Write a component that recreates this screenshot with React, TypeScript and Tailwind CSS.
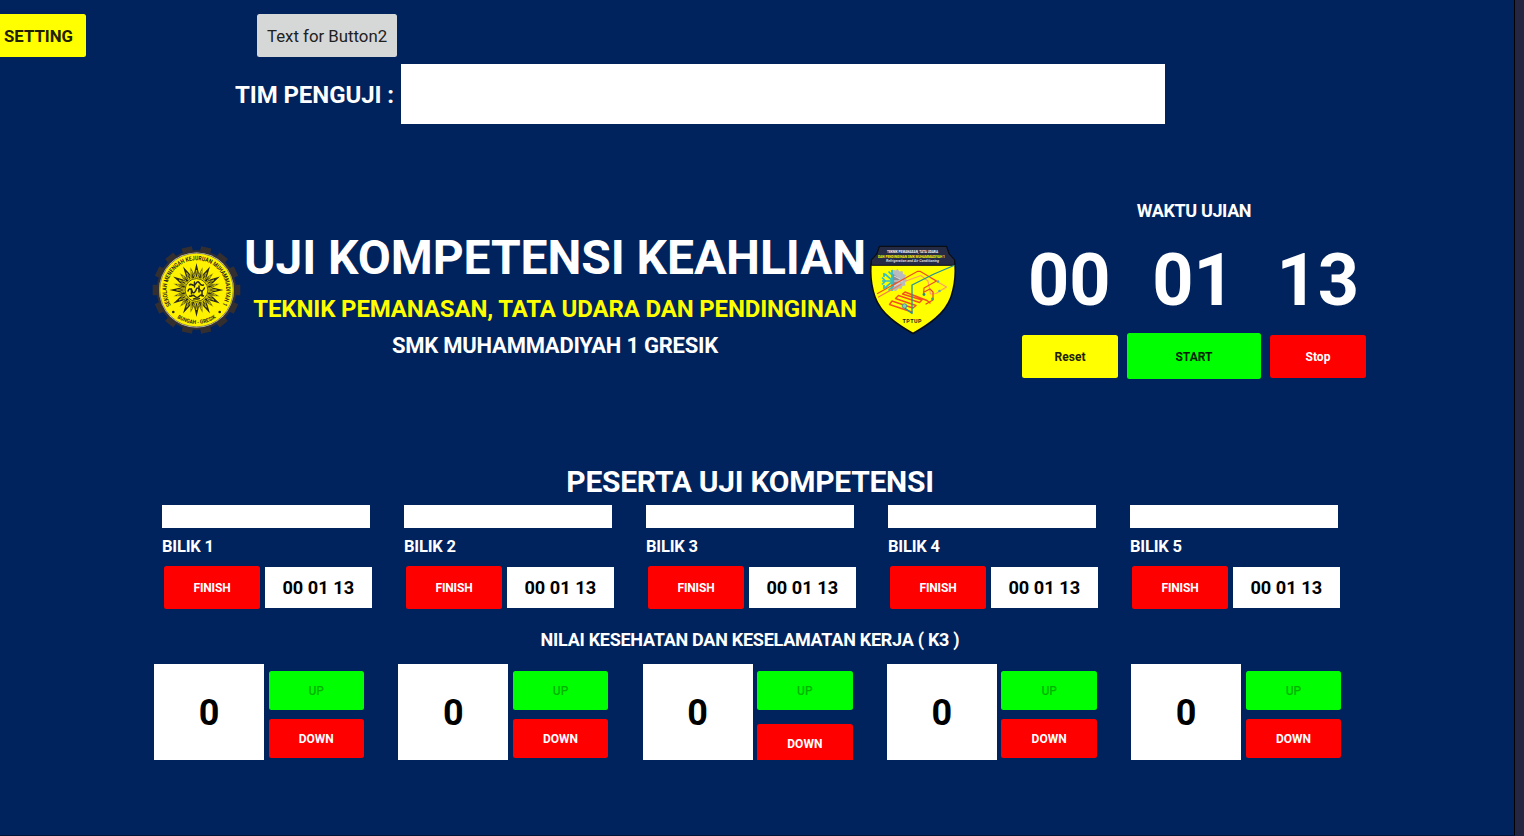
import type { ReactNode } from "react";

function cx(...parts: string[]) {
  return parts.join(" ");
}

function polar(cxp: number, cyp: number, r: number, deg: number) {
  const a = (deg * Math.PI) / 180;
  return [cxp + r * Math.sin(a), cyp - r * Math.cos(a)];
}

function sunburst(points: number, outer: number, inner: number, offset = 0) {
  const out: string[] = [];
  for (let i = 0; i < points * 2; i++) {
    const [x, y] = polar(45, 45, i % 2 ? inner : outer, offset + (i * 180) / points);
    out.push(`${x.toFixed(2)},${y.toFixed(2)}`);
  }
  return out.join(" ");
}

const TEETH = Array.from({ length: 14 }, (_, i) => 12.86 + (i * 360) / 14);

function SchoolLogo() {
  return (
    <svg viewBox="0.5 0 90 90" className="h-[90px] w-[90px]">
      <defs>
        <path id="ring-top" d="M19.800 60.700 A29.700 29.700 0 1 1 70.200 60.700" />
        <path id="ring-bottom" d="M24.100 71.800 A34 34 0 0 0 65.900 71.800" />
      </defs>
      <circle cx="45" cy="45" r="39.800" fill="#332e30" />
      {TEETH.map((a) => (
        <rect key={a} x="39.8" y="1.2" width="10.4" height="7" fill="#332e30" transform={`rotate(${a} 45 45)`} />
      ))}
      <circle cx="45" cy="45" r="37.500" fill="#e9e6df" />
      <circle cx="45" cy="45" r="36.800" fill="#fff200" stroke="#332e30" strokeWidth="0.5" />
      <polygon points={sunburst(12, 27, 13)} fill="#2b291c" />
      <polygon points={sunburst(12, 24, 12, 15)} fill="#2b291c" stroke="#fff200" strokeWidth="0.6" />
      <polygon points={sunburst(24, 20, 12)} fill="none" stroke="#fff200" strokeWidth="0.6" />
      <circle cx="45" cy="45" r="12.2" fill="#fff200" />
      <circle cx="45" cy="45" r="11.4" fill="none" stroke="#2b291c" strokeWidth="0.8" />
      <g fill="none" stroke="#2b291c" strokeWidth="1.500" strokeLinecap="round">
        <path d="M36.500 46c1-3 3-3 4 0s3 2 4-1 3-2 4 0 3 1 4.500-2" />
        <path d="M38 40c2-2 3 1 5 0s2-4 4-3 1 4 5 3" />
        <path d="M38 51c2 1 3-2 5 0s3 2 5 0 2-1 4 0M42 54c2-1 4 1 6-.500" />
        <path d="M43 37v5M47.500 41v6M40 44v5M50.500 46v5" />
      </g>
      <text fontSize="6.200" fontWeight="700" fill="#2b291c" className="font-['Roboto',sans-serif]">
        <textPath href="#ring-top" textLength="124" lengthAdjust="spacingAndGlyphs" startOffset="0.500">SEKOLAH MENENGAH KEJURUAN MUHAMMADIYAH 1</textPath>
      </text>
      <text fontSize="5.600" fontWeight="700" fill="#2b291c" className="font-['Roboto',sans-serif]">
        <textPath href="#ring-bottom" textLength="41" lengthAdjust="spacingAndGlyphs" startOffset="2">BUNGAH - GRESIK</textPath>
      </text>
      <circle cx="21.800" cy="67" r="1.300" fill="#2b291c" />
      <circle cx="68.200" cy="67" r="1.300" fill="#2b291c" />
    </svg>
  );
}

function DepartmentLogo() {
  return (
    <svg viewBox="0 0 86 90" className="h-[90px] w-[86px]">
      <path d="M9.500 1.500H76.500L79 9L84.500 15C86 26 85 40 81 52C75 69 58 80 43 88.500C28 80 11 69 5 52C1 40 0 26 1.500 15L7 9Z" fill="#ff0" stroke="#0b0d14" strokeWidth="1.600" />
      <path d="M9.500 1.500H76.500L79 9L84.500 15V20.300H1.500V15L7 9Z" fill="#252a45" stroke="#0b0d14" strokeWidth="1" />
      <g fontWeight="700" className="font-['Roboto',sans-serif]">
        <text x="17" y="8.200" fontSize="3.200" fill="#fff" textLength="51" lengthAdjust="spacingAndGlyphs">TEKNIK PEMANASAN, TATA UDARA</text>
        <text x="8" y="12.500" fontSize="3.300" fill="#ff0" textLength="67" lengthAdjust="spacingAndGlyphs">DAN PENDINGINAN SMK MUHAMMADIYAH 1</text>
        <text x="16" y="16.500" fontSize="3.200" fill="#ddd" fontStyle="italic" textLength="53" lengthAdjust="spacingAndGlyphs">Refrigeration and Air Conditioning</text>
        <text x="32.500" y="77.800" fontSize="5.400" fill="#1c1c1c" textLength="19">TPTUP</text>
      </g>
      <path d="M22 24.500l3.500 1 2-1.500 2 2.500 3-.500 .500 3 3 1-1 3 2.500 2.500-2.500 2 .500 3-3 .500-1 3-3-.500-2.500 2.500-4-1Z" fill="#b9babd" />
      <path d="M22 28l8 6-8 10Z" fill="#8b8e93" />
      <path d="M24 36h9M24 31l6 3M24 41l6-3" stroke="#dcdcde" strokeWidth="1" />
      <g fill="none" stroke="#35bfc4" strokeWidth="1.700">
        <path d="M22 25v21M12 36h11M15 29l8 7-8 7M18.500 26.500l3.500 3.500M18.500 45.500l3.500-3.500M12 32.500l3.500 3.500-3.500 3.500M14 28v4M14 44v-4" />
      </g>
      <g fill="none" strokeWidth="1.200" strokeLinejoin="round" strokeLinecap="round">
        <path d="M36 36L51 30.500L58 36L60.500 49L66 48.500L76.500 42L61 33" stroke="#ff9f68" />
        <path d="M7.500 48.500L47.700 26.300H50L66.500 36L54 43L53.500 49" stroke="#f0501e" />
        <path d="M8.500 52L31 39.500" stroke="#f47b4f" />
        <path d="M54 47L60 44L63 47V55L56 59" stroke="#e8442c" />
        <path d="M42 67L19.500 59.500L22 56L43 63L46 60.500L25.500 53.500L28.500 50.500L49.500 57.500L52 55L32.500 49L35 47L57 55.500L60 58" stroke="#f4511e" strokeWidth="1.400" />
        <path d="M84 20.500L64 29L42 40V68.500L33.500 62" stroke="#20929d" strokeWidth="1.300" />
      </g>
      <circle cx="34.500" cy="61" r="2.300" fill="#8fc7bd" stroke="#2b8a8c" strokeWidth="0.700" />
      <circle cx="54" cy="49.500" r="1.400" fill="#2b8a8c" />
      <circle cx="68" cy="36.500" r="1.300" fill="#5bb8a0" />
      <circle cx="69.500" cy="46" r="1.300" fill="#5bb8a0" />
      <circle cx="62.500" cy="54" r="1.400" fill="#4b9c78" />
    </svg>
  );
}

function Button({ className, children }: { className: string; children: ReactNode }) {
  return <button className={cx("flex items-center justify-center rounded-[2.5px] whitespace-nowrap", className)}>{children}</button>;
}

const BOOTHS = [1, 2, 3, 4, 5];

export default function App() {
  return (
    <div className="flex h-[836px] w-[1524px] overflow-hidden bg-[#232541] font-['Roboto',sans-serif] font-bold text-white">
      <main className="flex h-[835px] w-[1515px] shrink-0 flex-col border-r border-black bg-[#00235d] shadow-[0_1px_0_#02143a]">
        <div className="mt-[14px] flex h-[43px] shrink-0">
          <Button className="w-[86px] rounded-l-none bg-[#ff0] pt-[2px] pr-[9px] text-[16.8px] text-[#212100]">SETTING</Button>
          <Button className="ml-[171.400px] w-[139.400px] bg-[#d6d7d7] pt-[2px] text-[16.8px] font-normal text-[#212121]">Text for Button2</Button>
        </div>

        <div className="mt-[7.400px] flex h-[59.500px] shrink-0 items-center">
          <label className="w-[394px] pt-[2px] text-right text-[24px] leading-none tracking-[-0.08px]">TIM PENGUJI :</label>
          <div className="ml-[7.400px] h-full w-[764px] bg-white" />
        </div>

        <header className="mt-[76px] flex h-[180px] shrink-0 pl-[152px]">
          <div className="mt-[45px]"><SchoolLogo /></div>
          <div className="flex w-[628px] flex-col items-center pr-[2px] whitespace-nowrap">
            <h1 className="mt-[29px] text-[48px] leading-[58px] tracking-[-0.08px]">UJI KOMPETENSI KEAHLIAN</h1>
            <h2 className="mt-[8px] text-[24px] leading-[28px] tracking-[-0.14px] text-[#ff0]">TEKNIK PEMANASAN, TATA UDARA DAN PENDINGINAN</h2>
            <h3 className="mt-[10px] text-[22px] leading-[26px] tracking-[-0.24px]">SMK MUHAMMADIYAH 1 GRESIK</h3>
          </div>
          <div className="mt-[45px]"><DepartmentLogo /></div>
          <section className="ml-[66px] flex w-[344px] flex-col">
            <p className="text-center text-[18px] leading-[22px] tracking-[-0.38px]">WAKTU UJIAN</p>
            <div className="mt-[19px] flex h-[80px] items-center justify-between pr-[7px] pl-[6px] text-[72px] leading-none">
              <span>00</span>
              <span>01</span>
              <span>13</span>
            </div>
            <div className="mt-[12px] flex items-center justify-between text-[12px]">
              <Button className="mt-[1px] h-[43px] w-[96px] bg-[#ff0] pt-px text-[#212100]">Reset</Button>
              <Button className="h-[46px] w-[134px] bg-[#0f0] pt-[2px] text-[#042104]">START</Button>
              <Button className="mt-[1px] h-[43px] w-[96px] bg-[#f00] pt-px text-white">Stop</Button>
            </div>
          </section>
        </header>

        <h2 className="mt-[84px] w-[1500px] shrink-0 text-center text-[30px] leading-[36px] tracking-[-0.27px]">PESERTA UJI KOMPETENSI</h2>

        <div className="mt-[5px] flex shrink-0 gap-[32px] pl-[162px]">
          {BOOTHS.map((n) => (
            <div key={n} className="flex w-[210px] flex-col">
              <div className="h-[23.600px] w-[207.500px] bg-white" />
              <p className="mt-[9px] text-[16.500px] leading-[20px] tracking-[-0.2px]">BILIK {n}</p>
              <div className="mt-[8.500px] flex items-center pl-[2px]">
                <Button className="h-[43px] w-[96px] shrink-0 bg-[#f00] pt-px text-[12px] tracking-[-0.15px]">FINISH</Button>
                <div className="ml-[4.500px] flex h-[41.500px] w-[107.500px] shrink-0 items-center justify-center bg-white text-[18.200px] whitespace-nowrap text-black">00 01 13</div>
              </div>
            </div>
          ))}
        </div>

        <h3 className="mt-[20px] w-[1500px] shrink-0 text-center text-[18px] leading-[22px] tracking-[-0.27px]">NILAI KESEHATAN DAN KESELAMATAN KERJA ( K3 )</h3>

        <div className="mt-[13.500px] flex shrink-0 gap-[34.300px] pl-[154px]">
          {BOOTHS.map((n) => (
            <div key={n} className="flex h-[95.300px] w-[210px] shrink-0 overflow-hidden">
              <div className="flex w-[110px] items-center justify-center bg-white pt-[2px] text-[36px] text-black">0</div>
              <div className="ml-[4.500px] flex w-[95.500px] flex-col pt-[7px] text-[12px]">
                <Button className="h-[39px] shrink-0 bg-[#0f0] font-medium text-[#00b400]">UP</Button>
                <Button className={cx("h-[39px] shrink-0 bg-[#f00]", n === 3 ? "mt-[14px]" : "mt-[9px]")}>DOWN</Button>
              </div>
            </div>
          ))}
        </div>
      </main>
    </div>
  );
}
